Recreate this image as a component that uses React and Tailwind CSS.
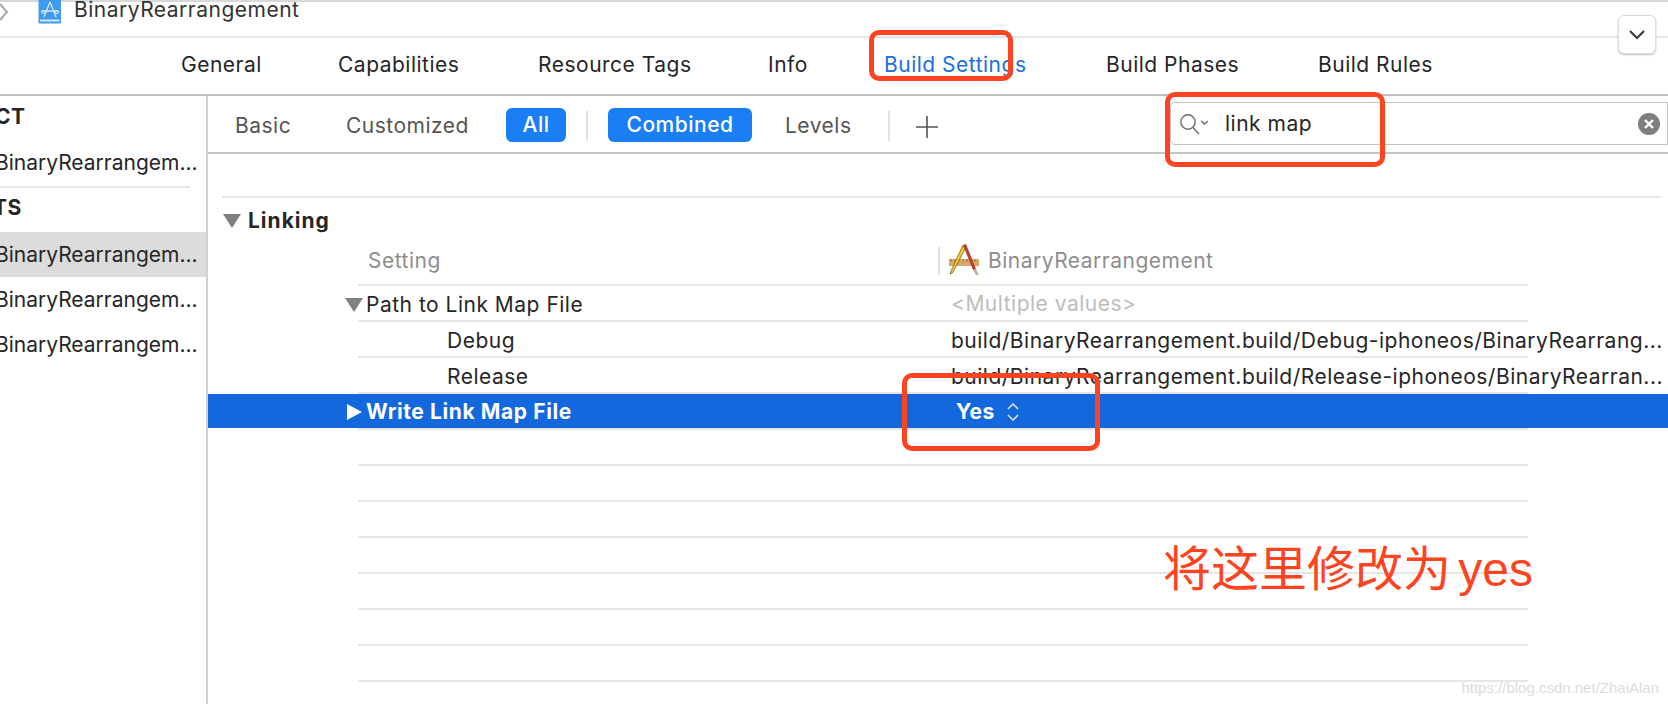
const tabs = [
  { label: 'General', w: 'w-[157px]' },
  { label: 'Capabilities', w: 'w-[200px]' },
  { label: 'Resource Tags', w: 'w-[230px]' },
  { label: 'Info', w: 'w-[116px]' },
  { label: 'Build Settings', w: 'w-[222px]', active: true },
  { label: 'Build Phases', w: 'w-[212px]' },
  { label: 'Build Rules', w: 'w-[130px]' },
];

const emptyRows = [1, 2, 3, 4, 5, 6];

function Triangle({ dir = 'down', className }) {
  return (
    <svg width="18" height="16" viewBox="0 0 18 16" className={className}>
      {dir === 'down' ? <path d="M0 1h18L9 15z" fill="currentColor" /> : <path d="M2 0l15 8-15 8z" fill="currentColor" />}
    </svg>
  );
}

function ProjectIcon() {
  return (
    <svg width="24" height="26" viewBox="0 0 24 26" className="shrink-0">
      <rect x="0.5" y="0" width="22.5" height="24.5" rx="1" fill="#3f9bf0" />
      <rect x="2" y="20.5" width="19.500" height="2" fill="#d5e9fc" />
      <path d="M12 3L6 18M12 3l6 15M4 12h16" stroke="#d5e9fc" strokeWidth="1.3" fill="none" />
      <circle cx="5" cy="13" r="1.6" stroke="#d5e9fc" fill="none" />
      <circle cx="19" cy="13" r="1.6" stroke="#d5e9fc" fill="none" />
    </svg>
  );
}

function XcodeIcon() {
  return (
    <svg width="32" height="32" viewBox="0 0 32 32" className="shrink-0">
      <rect x="0" y="15" width="30" height="7" fill="#d9a86c" />
      <path d="M2 15v3M6 15v3M10 15v3M14 15v3M18 15v3M22 15v3M26 15v3" stroke="#8f6a3c" strokeWidth="0.8" />
      <path d="M14 1L2 27l-1 3 2.500-1L16 5z" fill="#f2c92f" stroke="#6b5a1e" strokeWidth="0.7" />
      <path d="M14 1l3-1 10 25-3 1z" fill="#b8412f" />
      <path d="M24 26l3-1 3 6h-3z" fill="#c9b09a" />
    </svg>
  );
}

function SidebarItem({ selected }) {
  return (
    <div className={`h-[45px] flex items-center ${selected ? 'bg-[#dcdcdc]' : ''}`}>
      <span className="-ml-[5px] text-[21px] tracking-normal text-[#262626] whitespace-nowrap">BinaryRearrangem...</span>
    </div>
  );
}

function Row({ children, left, selected }) {
  return (
    <div className={`flex items-center pt-[2px] ${selected ? 'h-[34px] bg-[#1368de] text-white font-bold' : 'h-[36px] text-[#262626]'}`}>
      <div className="w-[158px] shrink-0 flex justify-end pr-[3px]">{left}</div>
      {children}
    </div>
  );
}

export default function App() {
  return (
    <div className="relative w-[1668px] h-[704px] overflow-hidden bg-white text-[21px] tracking-[0.5px] font-['Inter','Noto_Sans_CJK_SC',sans-serif]">
      <div className="h-[2px] bg-[#d8d8d8]" />

      {/* title bar */}
      <div className="h-[36px] flex items-center border-b-2 border-[#e6e6e6]">
        <svg width="10" height="20" viewBox="0 0 10 20" className="-mt-[14px]">
          <path d="M0 2l7 8-7 8" stroke="#a9a9a9" strokeWidth="2" fill="none" />
        </svg>
        <div className="ml-[28px] -mt-[14px]"><ProjectIcon /></div>
        <span className="ml-[12px] -mt-[18px] text-[#333]">BinaryRearrangement</span>
      </div>

      {/* tabs */}
      <div className="h-[58px] flex items-center pl-[181px] pb-[2px] border-b-2 border-[#c0c0c0]">
        {tabs.map(t => (
          <div key={t.label} className={`${t.w} shrink-0 whitespace-nowrap ${t.active ? 'text-[#1a6fdf]' : 'text-[#262626]'}`}>{t.label}</div>
        ))}
      </div>

      <div className="flex h-[608px]">
        {/* sidebar */}
        <div className="w-[208px] shrink-0 border-r-2 border-[#d0d0d0] overflow-hidden">
          <div className="h-[44px] pb-[2px] flex items-center font-bold text-[#262626] -ml-[5px]">
            <span>CT</span>
          </div>
          <SidebarItem />
          <div className="h-[2px] w-[190px] bg-[#e6e6e6] mt-[1px]" />
          <div className="h-[44px] pb-[4px] flex items-center font-bold text-[#262626] -ml-[7px]">
            <span>TS</span>
          </div>
          <SidebarItem selected />
          <SidebarItem />
          <SidebarItem />
        </div>

        {/* settings editor */}
        <div className="flex-1 min-w-0">
          <div className="h-[58px] flex items-center border-b-2 border-[#c4c4c4] pl-[27px] pt-[3px]">
            <span className="w-[111px] text-[#555]">Basic</span>
            <span className="w-[160px] text-[#555]">Customized</span>
            <span className="w-[60px] h-[34px] -mt-[1px] rounded-[6px] bg-[#1a7ef5] text-white font-medium flex items-center justify-center">All</span>
            <span className="ml-[20px] w-[2px] h-[30px] bg-[#e2e2e2]" />
            <span className="ml-[20px] w-[144px] h-[34px] -mt-[1px] rounded-[6px] bg-[#1a7ef5] text-white font-medium flex items-center justify-center">Combined</span>
            <span className="ml-[33px] w-[103px] text-[#555]">Levels</span>
            <span className="w-[2px] h-[30px] bg-[#e2e2e2]" />
            <svg width="24" height="24" viewBox="0 0 24 24" className="ml-[25px] mt-[2px]">
              <path d="M12 1v22M1 12h22" stroke="#555" strokeWidth="1.6" />
            </svg>
            <div className="ml-[231px] flex-1 h-[43px] -mt-[4px] border border-[#c2c2c2] rounded-l-[5px] flex items-center pl-[7px] pr-[7px] pt-[1px] text-[#262626]">
              <svg width="32" height="24" viewBox="0 0 32 24" className="text-[#6b6b6b] shrink-0">
                <circle cx="10" cy="10" r="7.2" stroke="currentColor" strokeWidth="1.4" fill="none" />
                <path d="M15 15.500l6 6.500M23 9l3.500 3 3.500-3" stroke="currentColor" strokeWidth="1.4" fill="none" />
              </svg>
              <span className="ml-[15px]">link map</span>
              <div className="ml-auto w-[22px] h-[22px] rounded-full bg-[#7f7f7f] flex items-center justify-center">
                <svg width="12" height="12" viewBox="0 0 12 12"><path d="M2 2l8 8M10 2l-8 8" stroke="#fff" strokeWidth="2.4" /></svg>
              </div>
            </div>
          </div>

          <div className="ml-[14px] mr-[7px] mt-[42px] h-[2px] bg-[#e6e6e6]" />
          <div className="h-[44px] flex items-center pl-[15px] pt-[2px] font-bold text-[#262626]">
            <Triangle className="text-[#808080]" />
            <span className="ml-[7px] tracking-[1px]">Linking</span>
          </div>

          {/* table */}
          <div className="h-[44px] pb-[4px] ml-[150px] mr-[140px] flex items-center border-b-2 border-[#e6e6e6] text-[#8e8e8e]">
            <span className="ml-[10px] w-[570px]">Setting</span>
            <span className="w-[2px] h-[28px] bg-[#e2e2e2]" />
            <span className="ml-[9px] -mt-[2px]"><XcodeIcon /></span>
            <span className="ml-[7px]">BinaryRearrangement</span>
          </div>
          <div className="relative">
            <div className="ml-[150px] mr-[140px]">
              {[1, 2, 3, 4].map(i => <div key={i} className="h-[36px] border-b-2 border-[#e6e6e6]" />)}
              {emptyRows.map(i => <div key={i} className="h-[36px] border-b-2 border-[#e6e6e6]" />)}
              <div className="h-[36px] border-b-2 border-[#e6e6e6]" />
            </div>
            <div className="absolute inset-x-0 top-0">
              <Row left={<Triangle className="text-[#808080]" />}>
                <span className="w-[585px] whitespace-nowrap">Path to Link Map File</span>
                <span className="text-[#bdbdbd] -mt-[3px]">&lt;Multiple values&gt;</span>
              </Row>
              <Row>
                <span className="ml-[81px] w-[504px]">Debug</span>
                <span className="whitespace-nowrap">build/BinaryRearrangement.build/Debug-iphoneos/BinaryRearrang...</span>
              </Row>
              <Row>
                <span className="ml-[81px] w-[504px]">Release</span>
                <span className="whitespace-nowrap">build/BinaryRearrangement.build/Release-iphoneos/BinaryRearran...</span>
              </Row>
              <Row selected left={<Triangle dir="right" className="text-white" />}>
                <span className="w-[590px] whitespace-nowrap tracking-[0.6px]">Write Link Map File</span>
                <span>Yes</span>
                <svg width="14" height="22" viewBox="0 0 14 22" className="ml-[11px]">
                  <path d="M2 8l5-5 5 5M2 14l5 5 5-5" stroke="#cfe0f8" strokeWidth="1.6" fill="none" />
                </svg>
              </Row>
            </div>
          </div>
        </div>
      </div>

      {/* chevron button over the tab line */}
      <div className="absolute left-[1618px] top-[15px] w-[38px] h-[39px] bg-white rounded-[6px] border border-[#dcdcdc] shadow-[0_1px_2px_rgba(0,0,0,0.25)] flex items-center justify-center">
        <svg width="18" height="12" viewBox="0 0 18 12"><path d="M2 2l7 7 7-7" stroke="#3c3c3c" strokeWidth="2.2" fill="none" /></svg>
      </div>

      {/* annotations drawn on the screenshot */}
      <div className="absolute left-[869px] top-[30px] w-[144px] h-[51px] border-[5px] border-[#fc4520] rounded-[10px]" />
      <div className="absolute left-[1165px] top-[92px] w-[220px] h-[75px] border-[5px] border-[#fc4520] rounded-[10px]" />
      <div className="absolute left-[902px] top-[373px] w-[198px] h-[78px] border-[5px] border-[#fc4520] rounded-[10px]" />
      <div className="absolute left-[1163px] top-[540px] text-[48px] leading-[60px] tracking-normal [word-spacing:-6px] text-[#fc4520] whitespace-nowrap font-['Liberation_Sans','Noto_Sans_CJK_SC',sans-serif]">将这里修改为 yes</div>
      <div className="absolute right-[9px] top-[677px] text-[15px] tracking-normal text-[#dcdcdc] whitespace-nowrap font-['Liberation_Sans',sans-serif]">https://blog.csdn.net/ZhaiAlan</div>
    </div>
  );
}
